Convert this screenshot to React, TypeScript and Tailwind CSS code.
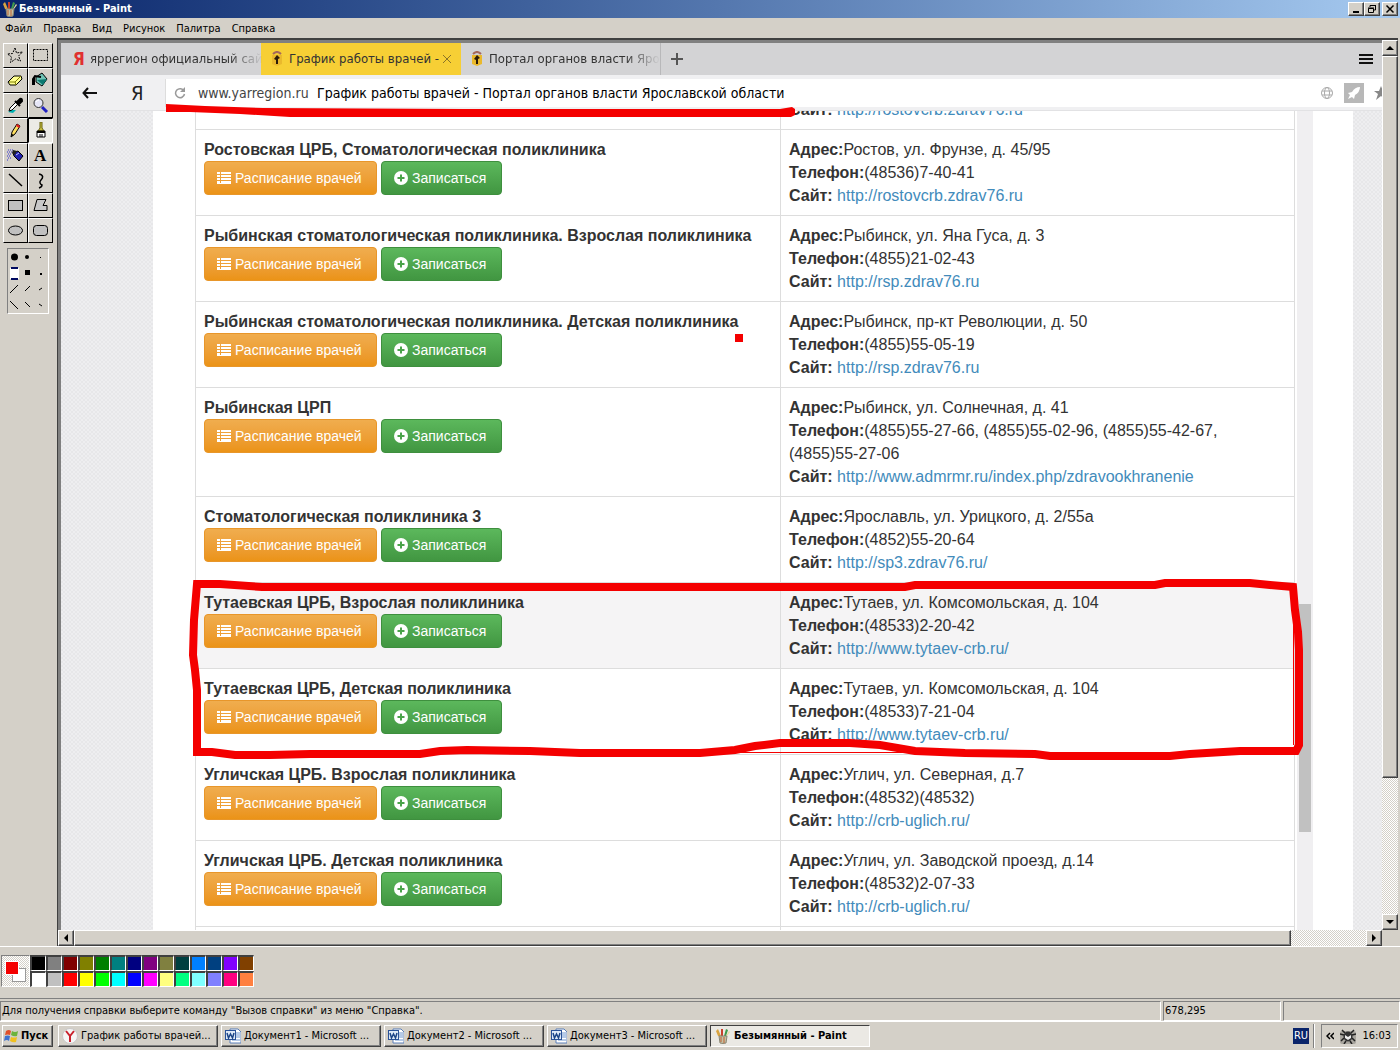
import type { ReactNode } from 'react'

type Clinic = { name: string; address: string; phone: string; site: string; marked?: boolean }

const CLINICS: Clinic[] = [
  { name: 'Ростовская ЦРБ, Стоматологическая поликлиника', address: 'Ростов, ул. Фрунзе, д. 45/95', phone: '(48536)7-40-41', site: 'http://rostovcrb.zdrav76.ru' },
  { name: 'Рыбинская стоматологическая поликлиника. Взрослая поликлиника', address: 'Рыбинск, ул. Яна Гуса, д. 3', phone: '(4855)21-02-43', site: 'http://rsp.zdrav76.ru' },
  { name: 'Рыбинская стоматологическая поликлиника. Детская поликлиника', address: 'Рыбинск, пр-кт Революции, д. 50', phone: '(4855)55-05-19', site: 'http://rsp.zdrav76.ru' },
  { name: 'Рыбинская ЦРП', address: 'Рыбинск, ул. Солнечная, д. 41', phone: '(4855)55-27-66, (4855)55-02-96, (4855)55-42-67, (4855)55-27-06', site: 'http://www.admrmr.ru/index.php/zdravookhranenie' },
  { name: 'Стоматологическая поликлиника 3', address: 'Ярославль, ул. Урицкого, д. 2/55а', phone: '(4852)55-20-64', site: 'http://sp3.zdrav76.ru/' },
  { name: 'Тутаевская ЦРБ, Взрослая поликлиника', address: 'Тутаев, ул. Комсомольская, д. 104', phone: '(48533)2-20-42', site: 'http://www.tytaev-crb.ru/', marked: true },
  { name: 'Тутаевская ЦРБ, Детская поликлиника', address: 'Тутаев, ул. Комсомольская, д. 104', phone: '(48533)7-21-04', site: 'http://www.tytaev-crb.ru/' },
  { name: 'Угличская ЦРБ. Взрослая поликлиника', address: 'Углич, ул. Северная, д.7', phone: '(48532)(48532)', site: 'http://crb-uglich.ru/' },
  { name: 'Угличская ЦРБ. Детская поликлиника', address: 'Углич, ул. Заводской проезд, д.14', phone: '(48532)2-07-33', site: 'http://crb-uglich.ru/' },
]

const MENU = ['Файл', 'Правка', 'Вид', 'Рисунок', 'Палитра', 'Справка']

const COLORS = [
  'bg-[#000000]', 'bg-[#808080]', 'bg-[#800000]', 'bg-[#808000]', 'bg-[#008000]', 'bg-[#008080]', 'bg-[#000080]',
  'bg-[#800080]', 'bg-[#808040]', 'bg-[#004040]', 'bg-[#0080ff]', 'bg-[#004080]', 'bg-[#8000ff]', 'bg-[#804000]',
  'bg-[#ffffff]', 'bg-[#c0c0c0]', 'bg-[#ff0000]', 'bg-[#ffff00]', 'bg-[#00ff00]', 'bg-[#00ffff]', 'bg-[#0000ff]',
  'bg-[#ff00ff]', 'bg-[#ffff80]', 'bg-[#00ff80]', 'bg-[#80ffff]', 'bg-[#8080ff]', 'bg-[#ff0080]', 'bg-[#ff8040]',
]

const RAISED = 'bg-[#d4d0c8] border border-t-white border-l-white border-r-[#404040] border-b-[#404040] shadow-[inset_-1px_-1px_0_#808080]'
const SUNKEN = 'border border-t-[#808080] border-l-[#808080] border-r-white border-b-white'
const DITHER = 'bg-[repeating-conic-gradient(#ffffff_0_25%,#d4d0c8_0_50%)] bg-[length:2px_2px]'

const TOOLS: { label: string; icon: ReactNode }[] = [
  { label: 'Выделение произвольной области', icon: <path d="M8 1l1.500 5 6-1-4 4 2 5-5-2-5 3.500 1-5.500-4-3 5-.5z" fill="none" stroke="#000" strokeDasharray="2 1" /> },
  { label: 'Выделение', icon: <rect x="1.500" y="2.500" width="14" height="11" fill="none" stroke="#000" strokeDasharray="2 1" /> },
  { label: 'Ластик', icon: <><path d="M1 10l6-6h7l1 3-6 6H3z" fill="#ffff90" stroke="#000" /><path d="M2 10h6l6-6M8 10l1 3" fill="none" stroke="#808000" /></> },
  { label: 'Заливка', icon: <><path d="M4 5l6-4 5 6-5 7-6-4z" fill="#6fc3b5" stroke="#000" /><path d="M5 8l6 5 4-6z" fill="#0c7a70" /><path d="M1 13V7l2-3 6 1M2 5v8" fill="none" stroke="#000" strokeWidth="2" /></> },
  { label: 'Выбор цветов', icon: <><path d="M1 15l3-2h5l-3 3z" fill="#00b0b0" /><path d="M2 14l1-3 6-6 2 2-6 6z" fill="#fff" stroke="#000" /><path d="M8 4l5 5M10 5l3-3q2-1 2 2l-3 3z" fill="#000" stroke="#000" strokeWidth="2" /></> },
  { label: 'Масштаб', icon: <><circle cx="6.500" cy="6" r="4.500" fill="#e6e6f6" stroke="#333" /><path d="M4 5q1-2 3-2" stroke="#fff" fill="none" /><path d="M10 10l5 5" stroke="#2020c0" strokeWidth="3" /></> },
  { label: 'Карандаш', icon: <><path d="M4 15l1-5 5-8 3 2-5 8z" fill="#ffe060" stroke="#000" /><path d="M10 2l3 2-1 2-3-2z" fill="#e02020" /><path d="M4 15l1-3 2 1z" fill="#000" /></> },
  { label: 'Кисть', icon: <><path d="M8 0h2v6l2 3H6l2-3z" fill="#c8c040" stroke="#6b6410" /><path d="M5 9h8v6H5z" fill="#fff" stroke="#000" /><path d="M5 9h8v2H5z" fill="#000" /><path d="M8 12v3M10 12v3" stroke="#000" /></> },
  { label: 'Распылитель', icon: <><path d="M1 3h5M0 5h5M1 7h4M0 9h3M1 11h3M0 13h2" stroke="#3030d0" strokeDasharray="1 1" /><path d="M6 6l5-2 5 5-4 5-5-5z" fill="#2020b0" stroke="#000" /><path d="M6 3l4 1-2 4-3-2z" fill="#202020" /><path d="M9 8l3-2" stroke="#c0c0ff" /></> },
  { label: 'Надпись', icon: <text x="2" y="14" fontSize="17" fontWeight="bold" fontFamily="Liberation Serif, serif">A</text> },
  { label: 'Линия', icon: <path d="M2 2l13 12" stroke="#000" strokeWidth="1.500" /> },
  { label: 'Кривая', icon: <path d="M7 2c5 1 4 4 2 6s-1 4 1 5q0 2-3 3" fill="none" stroke="#000" strokeWidth="1.500" /> },
  { label: 'Прямоугольник', icon: <rect x="1.500" y="3.500" width="14" height="10" fill="#c0c0c0" stroke="#000" /> },
  { label: 'Многоугольник', icon: <path d="M5 2.500h9l-3 6h4v5H2z" fill="#c8c8c8" stroke="#000" /> },
  { label: 'Эллипс', icon: <ellipse cx="8.500" cy="8.500" rx="7" ry="4.500" fill="#c0c0c0" stroke="#000" /> },
  { label: 'Скругленный прямоугольник', icon: <rect x="1.500" y="3.500" width="14" height="10" rx="3" fill="#c0c0c0" stroke="#000" /> },
]

function PaintIcon() {
  return (
    <svg viewBox="0 0 16 16" className="w-4 h-4 shrink-0">
      <path d="M3 8L1 3l2-2 3 7z" fill="#d9a441" />
      <path d="M6 8V1h2v7z" fill="#c8402c" />
      <path d="M9 8l2-7 2 1-2 6z" fill="#3f9a4c" />
      <path d="M11 8l3-5 1 1-3 4z" fill="#e8d8a0" />
      <path d="M4 8h8l-1 7q-3 1-6 0z" fill="#c4c0a4" stroke="#8a8674" />
      <path d="M6 9v5M9 9v6" stroke="#c06030" />
    </svg>
  )
}

function WordIcon() {
  return (
    <svg viewBox="0 0 16 16" className="w-4 h-4 shrink-0">
      <path d="M5 1h8l3 3v11H5z" fill="#fff" stroke="#5b7fb8" />
      <path d="M11 5h4M11 7h4M11 9h4M7 12h8" stroke="#6d95cf" />
      <rect x="0.500" y="2.500" width="10" height="9" fill="#dfeaf8" stroke="#2a5298" />
      <path d="M2 5l1.500 5L5.500 6l2 4L9 5" fill="none" stroke="#1c4587" strokeWidth="1.500" />
    </svg>
  )
}

function YandexIcon() {
  return (
    <svg viewBox="0 0 16 16" className="w-4 h-4 shrink-0">
      <circle cx="8" cy="8" r="7.500" fill="#f6f6f6" stroke="#c8c8c8" />
      <path d="M4 3l4 5 4-5M8 8v6" fill="none" stroke="#c9202c" strokeWidth="2" />
    </svg>
  )
}

function CrestIcon() {
  return (
    <svg viewBox="0 0 12 16" className="w-3 h-4 shrink-0">
      <path d="M1 4h10v9l-5 2-5-2z" fill="#eab92c" />
      <path d="M2 3q4-4 8 0" fill="none" stroke="#a5685c" strokeWidth="2" />
      <path d="M6 4l3 3-2 1v5H5V9L3 8z" fill="#2a1a08" />
    </svg>
  )
}

function Arrow({ d }: { d: string }) {
  return <svg viewBox="0 0 8 8" className="w-2 h-2"><path d={d} fill="#000" /></svg>
}

function ScrollButton({ label, d }: { label: string; d: string }) {
  return (
    <button aria-label={label} className={`${RAISED} w-4 h-4 shrink-0 flex items-center justify-center`}>
      <Arrow d={d} />
    </button>
  )
}

function TitleBar() {
  return (
    <header className="h-[18px] shrink-0 flex items-center pl-[2px] pr-[2px] bg-linear-to-r from-[#0a246a] to-[#a6caf0]">
      <PaintIcon />
      <h1 className="flex-1 pl-[1px] text-white font-bold">Безымянный - Paint</h1>
      <button aria-label="Свернуть" className={`${RAISED} w-4 h-[14px] flex items-center justify-center`}>
        <svg viewBox="0 0 10 10" className="w-[10px] h-[10px]"><path d="M2 8h6" stroke="#000" strokeWidth="2" /></svg>
      </button>
      <button aria-label="Восстановить" className={`${RAISED} w-4 h-[14px] flex items-center justify-center`}>
        <svg viewBox="0 0 10 10" className="w-[10px] h-[10px]"><path d="M3 3V1.500h5.500V6H7M3 1.500h6M1.500 4.500h5v4h-5zM1 4h6" fill="none" stroke="#000" /></svg>
      </button>
      <button aria-label="Закрыть" className={`${RAISED} ml-[2px] w-4 h-[14px] flex items-center justify-center`}>
        <svg viewBox="0 0 10 10" className="w-[10px] h-[10px]"><path d="M1.500 1.500l7 7M8.500 1.500l-7 7" stroke="#000" strokeWidth="1.500" /></svg>
      </button>
    </header>
  )
}

function ToolBox() {
  return (
    <aside className="w-[57px] shrink-0 pl-[3px] pt-[5px]">
      <div className="grid grid-cols-2 w-[50px]">
        {TOOLS.map((t) => (
          <button key={t.label} aria-label={t.label}
            className={`w-[25px] h-[25px] flex items-center justify-center border ${t.label === 'Кисть'
              ? 'border-t-black border-l-black border-r-white border-b-white bg-[#ecebe6]'
              : 'border-t-white border-l-white border-r-black border-b-black'}`}>
            <svg viewBox="0 0 17 17" className="w-[17px] h-[17px]">{t.icon}</svg>
          </button>
        ))}
      </div>
      <div className={`${SUNKEN} ml-1 mt-[5px] w-[42px] h-[66px]`}>
        <svg viewBox="0 0 40 64" className="w-[40px] h-[64px]">
          <circle cx="6.500" cy="8" r="3.500" />
          <circle cx="19" cy="8" r="2" />
          <rect x="32" y="8" width="1" height="1" />
          <rect x="2" y="19" width="9" height="11" fill="#fff" />
          <path d="M3 19h7M3 30h7" stroke="#000a60" strokeWidth="2" />
          <rect x="17" y="21" width="5" height="5" />
          <rect x="32" y="24" width="2" height="2" />
          <path d="M2 44l8-8M17 42l5-5M31 41l3-2M2 52l8 8M17 53l5 5M31 55l3 2" stroke="#000" />
        </svg>
      </div>
    </aside>
  )
}

function BrowserTabs() {
  return (
    <div className="h-8 shrink-0 flex items-center bg-[#d3d3d5] text-[13px] text-[#333]">
      <button className="w-[200px] h-full flex items-center pl-3 pr-1">
        <span className="w-[17px] shrink-0 text-left text-[17px] leading-8 font-bold text-[#e03030]">Я</span>
        <span className="text-left whitespace-nowrap mask-r-from-80%">яррегион официальный сай</span>
      </button>
      <div className="w-[200px] h-full flex items-center pl-[10px] pr-2 bg-[#f7cf35]">
        <CrestIcon />
        <button className="flex-1 pl-[6px] text-left whitespace-nowrap">График работы врачей -</button>
        <button aria-label="Закрыть вкладку" className="w-3 h-3 text-[#8a7428]">
          <svg viewBox="0 0 12 12"><path d="M2 2l8 8M10 2l-8 8" stroke="currentColor" /></svg>
        </button>
      </div>
      <button className="w-[200px] h-full flex items-center pl-[10px] pr-1 border-r border-[#b8b8ba]">
        <CrestIcon />
        <span className="pl-[6px] text-left whitespace-nowrap mask-r-from-80%">Портал органов власти Яро</span>
      </button>
      <button aria-label="Новая вкладка" className="w-8 flex justify-center">
        <svg viewBox="0 0 12 12" className="w-3 h-3"><path d="M6 0v12M0 6h12" stroke="#555" strokeWidth="2" /></svg>
      </button>
      <button aria-label="Меню" className="ml-auto mr-[9px]">
        <svg viewBox="0 0 14 12" className="w-[14px] h-3"><path d="M0 2h14M0 6h14M0 10h14" stroke="#111" strokeWidth="2" /></svg>
      </button>
    </div>
  )
}

function AddressBar() {
  return (
    <div className="h-9 shrink-0 flex items-center bg-[#f0f0f2] border-b border-[#e2e2e4] text-[14px]">
      <button aria-label="Назад" className="ml-[21px] w-[15px]">
        <svg viewBox="0 0 15 12"><path d="M6 1L1.500 6 6 11M1 6h14" fill="none" stroke="#111" strokeWidth="2" /></svg>
      </button>
      <button aria-label="Яндекс" className="ml-[34px] w-[34px] text-left text-[20px] leading-7 text-[#222]">Я</button>
      <div className="flex-1 h-7 flex items-center bg-white border-l border-[#ddd] pl-2 overflow-hidden">
        <button aria-label="Обновить" className="w-3 h-3 mr-3">
          <svg viewBox="0 0 12 12"><path d="M10 4A4.500 4.500 0 1 0 10.500 7" fill="none" stroke="#999" strokeWidth="1.500" /><path d="M11 0v5H6z" fill="#999" /></svg>
        </button>
        <input aria-label="Адрес" defaultValue="www.yarregion.ru" className="w-[119px] text-[#444] outline-none" />
        <span className="flex-1 whitespace-nowrap text-black">График работы врачей - Портал органов власти Ярославской области</span>
        <svg viewBox="0 0 12 12" className="w-3 h-3 mr-[11px]"><g fill="none" stroke="#aaa"><circle cx="6" cy="6" r="5.500" /><ellipse cx="6" cy="6" rx="2.500" ry="5.500" /><path d="M1 4h10M1 8h10" /></g></svg>
        <svg viewBox="0 0 20 20" className="w-5 h-5 mr-[10px]"><rect width="20" height="20" fill="#b8b8b8" /><path d="M16 4q-5 0-8 5l-4 1 2 2-2 4 4-2 2 2 1-4q5-3 5-8z" fill="#fff" /></svg>
        <svg viewBox="0 0 14 14" className="w-[14px] h-[14px] mr-[-6px] shrink-0"><path d="M7 0l2 5h5l-4 3 2 6-5-4-5 4 2-6-4-3h5z" fill="#888" /></svg>
      </div>
    </div>
  )
}

function ClinicRow({ clinic }: { clinic: Clinic }) {
  return (
    <tr className={clinic.marked ? 'bg-[#f5f4f5]' : ''}>
      <td className="border border-[#ddd] p-2 align-top">
        <div className="font-bold">{clinic.name}</div>
        <div className="flex gap-1 text-[14px] text-white">
          <button className="w-[173px] h-[34px] flex items-center pl-3 gap-1 rounded-sm border border-[#e8962a] bg-linear-to-b from-[#f0ad4e] to-[#eb9316]">
            <svg viewBox="0 0 14 14" className="w-[14px] h-[14px] shrink-0"><path d="M0 2h3M4 2h10M0 5h3M4 5h10M0 8h3M4 8h10M0 11h3M4 11h10" stroke="#fff" strokeWidth="2" /><path d="M0 12.500h14" stroke="#fff" /></svg>
            Расписание врачей
          </button>
          <button className="w-[121px] h-[34px] flex items-center pl-3 gap-1 rounded-sm border border-[#3e8f3e] bg-linear-to-b from-[#5cb85c] to-[#419641]">
            <svg viewBox="0 0 14 14" className="w-[14px] h-[14px] shrink-0"><circle cx="7" cy="7" r="7" fill="#fff" /><path d="M7 3.500v7M3.500 7h7" stroke="#4aa34a" strokeWidth="2" /></svg>
            Записаться
          </button>
        </div>
      </td>
      <td className="border border-[#ddd] p-2 align-top">
        <div><b>Адрес:</b>{clinic.address}</div>
        <div className="max-w-[440px]"><b>Телефон:</b>{clinic.phone}</div>
        <div><b>Сайт:</b> <a href={clinic.site} className="text-[#428bbb]">{clinic.site}</a></div>
      </td>
    </tr>
  )
}

function SitePage() {
  return (
    <div className="flex-1 min-h-0 overflow-hidden flex pl-[92px] pr-[29px] bg-[repeating-conic-gradient(#e7e7e9_0_25%,#eeeef0_0_50%)] bg-[length:4px_4px]">
      <div className="flex-1 flex bg-white pl-[42px] pr-10">
        <table className="flex-1 self-start -mt-[22px] table-fixed border-collapse text-[16px] leading-[23px] text-[#333] font-['Liberation_Sans',Arial,sans-serif]">
          <colgroup><col className="w-[585px]" /><col /></colgroup>
          <tbody>
            <tr>
              <td className="border border-[#ddd] p-2" />
              <td className="border border-[#ddd] p-2"><b>Сайт:</b> <a href="http://rostovcrb.zdrav76.ru" className="text-[#428bbb]">http://rostovcrb.zdrav76.ru</a></td>
            </tr>
            {CLINICS.map((c) => <ClinicRow key={c.name} clinic={c} />)}
            <tr><td className="border border-[#ddd] p-2" /><td className="border border-[#ddd] p-2" /></tr>
          </tbody>
        </table>
        <div className="ml-[2px] w-4 flex flex-col bg-[#f0eff1]">
          <div className="grow-[492]" />
          <div className="grow-[228] ml-[2px] mr-[2px] bg-[#c1c1c1]" />
          <div className="grow-[98]" />
        </div>
      </div>
    </div>
  )
}

// brush strokes, in window coordinates
function Strokes() {
  return (
    <svg className="absolute left-0 top-0 w-full h-full pointer-events-none">
      <g transform="translate(-61 -43)" fill="none" stroke="#f40000" strokeWidth="8">
        <path d="M166 104l39 2 58 2 200 1h317l12-2 3 2v6l-4 2H290l-50-3-50-2h-24z" fill="#f40000" stroke="none" />
        <path d="M197 752V690L195 670 193 655 194 620 197 584 220 584 262 587H905L915 585H1155L1165 583H1250L1270 585 1293 587 1295 610 1298 632 1299 650V745L1296 751H1240L1190 754 1170 756H1050L1035 754 965 753 915 751 880 745 850 743H780L755 746 735 750 700 753H580L530 751 467 750 440 751 420 754H310L270 755H235L212 752Z" />
        <path d="M740 752.500h175M1293.500 620v125" strokeWidth="1" />
        <rect x="735" y="334" width="8" height="8" fill="#f40000" stroke="none" />
      </g>
    </svg>
  )
}

function Canvas() {
  return (
    <main className="flex-1 min-w-0 flex flex-col border-t-2 border-l border-[#404040] mr-[2px]">
      <div className="flex-1 min-h-0 flex">
        <div className="flex-1 min-w-0 flex bg-[#808080] pl-[3px] pt-[3px]">
          <div className="relative flex-1 min-w-0 flex flex-col">
            <BrowserTabs />
            <AddressBar />
            <SitePage />
            <Strokes />
          </div>
        </div>
        <div className={`w-4 flex flex-col ${DITHER}`}>
          <ScrollButton label="Вверх" d="M4 2l4 4H0z" />
          <div className={`${RAISED} grow-[722]`} />
          <div className="grow-[136]" />
          <ScrollButton label="Вниз" d="M4 6l4-4H0z" />
        </div>
      </div>
      <div className="h-4 shrink-0 flex pr-4">
        <ScrollButton label="Влево" d="M2 4l4-4v8z" />
        <div className={`flex-1 flex ${DITHER}`}>
          <div className={`${RAISED} grow-[1217]`} />
          <div className="grow-[75]" />
        </div>
        <ScrollButton label="Вправо" d="M6 4L2 0v8z" />
      </div>
    </main>
  )
}

function Palette() {
  return (
    <section className="h-[52px] shrink-0 flex pt-[8px] pl-[1px] border-t border-white">
      <div className={`${SUNKEN} ${DITHER} relative w-[29px] h-8`}>
        <span className="absolute left-[10px] top-3 w-[14px] h-[14px] bg-white border border-[#999]" />
        <span className="absolute left-[3px] top-[5px] w-[14px] h-[14px] bg-[#f40000] border border-white" />
      </div>
      <div className="grid grid-cols-14 w-56 h-8">
        {COLORS.map((c) => (
          <button key={c} aria-label={c} className={`${c} w-4 h-4 border-t-2 border-l-2 border-r border-b border-t-[#404040] border-l-[#404040] border-r-white border-b-white`} />
        ))}
      </div>
    </section>
  )
}

function StatusBar() {
  return (
    <footer className="h-[23px] shrink-0 flex gap-[2px] pt-[2px] border-t border-[#808080] leading-[18px]">
      <div className={`${SUNKEN} h-5 flex-1 pl-[1px]`}>Для получения справки выберите команду "Вызов справки" из меню "Справка".</div>
      <div className={`${SUNKEN} h-5 w-[118px] pl-[1px]`}>678,295</div>
      <div className={`${SUNKEN} h-5 w-[117px]`} />
    </footer>
  )
}

function TaskBar() {
  const tasks = [
    { title: 'График работы врачей...', icon: <YandexIcon /> },
    { title: 'Документ1 - Microsoft ...', icon: <WordIcon /> },
    { title: 'Документ2 - Microsoft ...', icon: <WordIcon /> },
    { title: 'Документ3 - Microsoft ...', icon: <WordIcon /> },
  ]
  return (
    <nav className="h-[29px] shrink-0 flex items-center pl-[2px] pr-[2px] border-t border-white">
      <button className={`${RAISED} w-[51px] h-[22px] flex items-center pl-[1px] gap-[1px] font-bold`}>
        <svg viewBox="0 0 16 16" className="w-4 h-4 shrink-0">
          <path d="M2 3q3-2 5 0L6 7Q4 6 1 7z" fill="#e0502c" />
          <path d="M8 3q3 2 6 0l-1 5q-3 1-6-1z" fill="#6cb33e" />
          <path d="M1 8q3-1 5 0l-1 5q-2-2-5 0z" fill="#3f72d0" />
          <path d="M7 9q3 1 6 0l-1 5q-3 1-6-1z" fill="#f0c020" />
        </svg>
        Пуск
      </button>
      <div className="flex gap-[3px] ml-[5px]">
        {tasks.map((t) => (
          <button key={t.title} className={`${RAISED} w-[160px] h-[22px] flex items-center gap-[3px] pl-[3px] whitespace-nowrap`}>
            {t.icon}{t.title}
          </button>
        ))}
        <button className="w-[160px] h-[22px] flex items-center gap-[3px] pl-1 whitespace-nowrap font-bold bg-[#ebe9e4] border border-t-[#404040] border-l-[#404040] border-r-white border-b-white">
          <PaintIcon />Безымянный - Paint
        </button>
      </div>
      <div className="ml-auto w-4 h-4 flex items-center justify-center bg-[#0a246a] text-white">RU</div>
      <div className="ml-1 mr-[6px] w-[2px] h-6 border-l border-l-[#808080] border-r border-r-white" />
      <div className={`${SUNKEN} w-[77px] h-6 flex items-center justify-between pl-1 pr-[6px]`}>
        <button aria-label="Показать скрытые значки">
          <svg viewBox="0 0 8 8" className="w-2 h-2"><path d="M4 1L1 4l3 3M8 1L5 4l3 3" fill="none" stroke="#000" strokeWidth="1.500" /></svg>
        </button>
        <svg viewBox="0 0 16 16" className="w-4 h-4">
          <rect y="3" width="16" height="13" rx="2" fill="#a8a59e" />
          <path d="M5 5L2 2M11 5l3-3M4 7L0 6M12 7l4-1M4 10l-3 3M12 10l3 3M6 13l-2 3M10 13l2 3" stroke="#222" strokeWidth="1.500" />
          <ellipse cx="8" cy="8.500" rx="4.500" ry="5" fill="#333" />
          <path d="M5 7l3 2 3-2v3l-3 2-3-2z" fill="#eee" />
        </svg>
        <time>16:03</time>
      </div>
    </nav>
  )
}

export default function App() {
  return (
    <div className="h-screen flex flex-col overflow-hidden bg-[#d4d0c8] text-[11px] leading-4 text-black font-['DejaVu_Sans_Condensed','DejaVu_Sans',sans-serif]">
      <TitleBar />
      <nav className="h-5 shrink-0 flex items-center pt-[2px] pl-[5px] gap-[11px]">
        {MENU.map((m) => <button key={m}>{m}</button>)}
      </nav>
      <div className="flex-1 min-h-0 flex">
        <ToolBox />
        <Canvas />
      </div>
      <Palette />
      <StatusBar />
      <TaskBar />
    </div>
  )
}
